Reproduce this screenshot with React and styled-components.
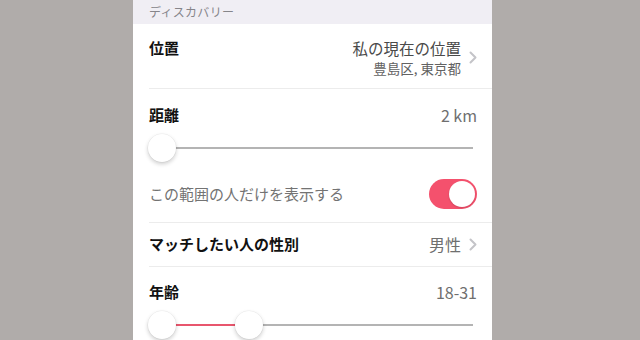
import React from "react";
import styled, { createGlobalStyle } from "styled-components";

const GlobalStyle = createGlobalStyle`
  html, body {
    margin: 0;
    padding: 0;
    background: #b0acaa;
    font-family: "Noto Sans CJK JP", "Noto Sans", sans-serif;
  }
`;

const Page = styled.div`
  width: 640px;
  height: 340px;
  overflow: hidden;
  display: flex;
`;

const Panel = styled.div`
  width: 359px;
  margin-left: 133px;
  background: #ffffff;
  display: flex;
  flex-direction: column;
`;

const Header = styled.div`
  height: 24px;
  background: #f0eef4;
  display: flex;
  align-items: center;
  padding-left: 16px;
  font-size: 12px;
  color: #86858a;
  letter-spacing: 0.3px;
`;

const Divider = styled.div`
  height: 1px;
  margin-left: 16px;
  background: #ececec;
  flex-shrink: 0;
`;

const Row = styled.div`
  display: flex;
  justify-content: space-between;
  align-items: ${(p) => (p.$top ? "flex-start" : "center")};
  height: ${(p) => p.$height}px;
  padding: ${(p) => (p.$top ? "15px" : "0")} 15px 0 16px;
  box-sizing: border-box;
`;

const Section = styled.div`
  display: flex;
  flex-direction: column;
  padding: ${(p) => p.$pad};
`;

const Label = styled.div`
  font-size: 15px;
  line-height: 18px;
  font-weight: ${(p) => (p.$muted ? 400 : 700)};
  color: ${(p) => (p.$muted ? "#737373" : "#111111")};
`;

const LabelLine = styled.div`
  display: flex;
  justify-content: space-between;
  align-items: center;
  padding: 0 15px 0 16px;
`;

const Value = styled.div`
  font-size: 16px;
  line-height: 18px;
  color: #6f6f6f;
  font-weight: 400;
`;

const ValueGroup = styled.div`
  display: flex;
  align-items: center;
  gap: 8px;
`;

const Stack = styled.div`
  display: flex;
  flex-direction: column;
  align-items: flex-end;
`;

const MainValue = styled.div`
  font-size: 15.5px;
  line-height: 18px;
  color: #4a4a4a;
  font-weight: 400;
`;

const SubValue = styled.div`
  font-size: 13.5px;
  line-height: 16px;
  margin-top: 3px;
  color: #626262;
  font-weight: 400;
`;

const SliderBox = styled.div`
  position: relative;
  height: 30px;
  margin: ${(p) => p.$margin};
  margin-left: 16px;
  margin-right: 19px;
`;

const TrackLine = styled.div`
  position: absolute;
  top: 14px;
  left: 13px;
  right: 0;
  height: 2px;
  background: #b4b4b4;
`;

const Fill = styled.div`
  position: absolute;
  top: 14px;
  height: 2px;
  background: #e8566d;
`;

const Thumb = styled.div`
  position: absolute;
  top: 1px;
  width: 28px;
  height: 28px;
  margin-left: -14px;
  border-radius: 50%;
  background: #ffffff;
  box-shadow: 0 2px 4px rgba(0, 0, 0, 0.2), 0 0 0 0.5px rgba(0, 0, 0, 0.06);
`;

const ToggleTrack = styled.div`
  width: 48px;
  height: 30px;
  border-radius: 15px;
  background: #f4516d;
  display: flex;
  align-items: center;
  justify-content: flex-end;
  padding: 2px;
  box-sizing: border-box;
`;

const ToggleKnob = styled.div`
  width: 26px;
  height: 26px;
  border-radius: 50%;
  background: #ffffff;
  box-shadow: 0 1px 2px rgba(0, 0, 0, 0.15);
`;

const Chevron = () => (
  <svg width="8" height="13" viewBox="0 0 8 13">
    <polyline
      points="1.5,1.5 6.5,6.5 1.5,11.5"
      fill="none"
      stroke="#c4c4c8"
      strokeWidth="2"
      strokeLinecap="round"
      strokeLinejoin="round"
    />
  </svg>
);

const Slider = ({ from = 0, to, margin }) => {
  const pct = (v) => `calc(13px + (100% - 13px) * ${v})`;
  return (
    <SliderBox $margin={margin}>
      <TrackLine />
      {from !== null && to > from && (
        <Fill style={{ left: pct(from), width: `calc((100% - 13px) * ${to - from})` }} />
      )}
      {from !== null && <Thumb style={{ left: pct(from) }} />}
      <Thumb style={{ left: pct(to) }} />
    </SliderBox>
  );
};

export default function App() {
  const ageRange = { min: 18, max: 31, low: 18, limit: 65 };
  const ageTo = (ageRange.max - ageRange.low) / (ageRange.limit - ageRange.low - 0.5);

  return (
    <>
      <GlobalStyle />
      <Page>
        <Panel>
          <Header>ディスカバリー</Header>

          <Row $top $height={65}>
            <Label>位置</Label>
            <ValueGroup>
              <Stack>
                <MainValue>私の現在の位置</MainValue>
                <SubValue>豊島区, 東京都</SubValue>
              </Stack>
              <Chevron />
            </ValueGroup>
          </Row>
          <Divider />

          <Section $pad="17px 0 13px">
            <LabelLine>
              <Label>距離</Label>
              <Value>2 km</Value>
            </LabelLine>
            <Slider from={null} to={0} margin="9px 0 16px" />
            <LabelLine>
              <Label $muted>この範囲の人だけを表示する</Label>
              <ToggleTrack>
                <ToggleKnob />
              </ToggleTrack>
            </LabelLine>
          </Section>
          <Divider />

          <Row $height={44}>
            <Label>マッチしたい人の性別</Label>
            <ValueGroup>
              <Value>男性</Value>
              <Chevron />
            </ValueGroup>
          </Row>
          <Divider />

          <Section $pad="16px 0 0">
            <LabelLine>
              <Label>年齢</Label>
              <Value>18-31</Value>
            </LabelLine>
            <Slider from={0} to={ageTo} margin="9px 0 0" />
          </Section>
        </Panel>
      </Page>
    </>
  );
}
